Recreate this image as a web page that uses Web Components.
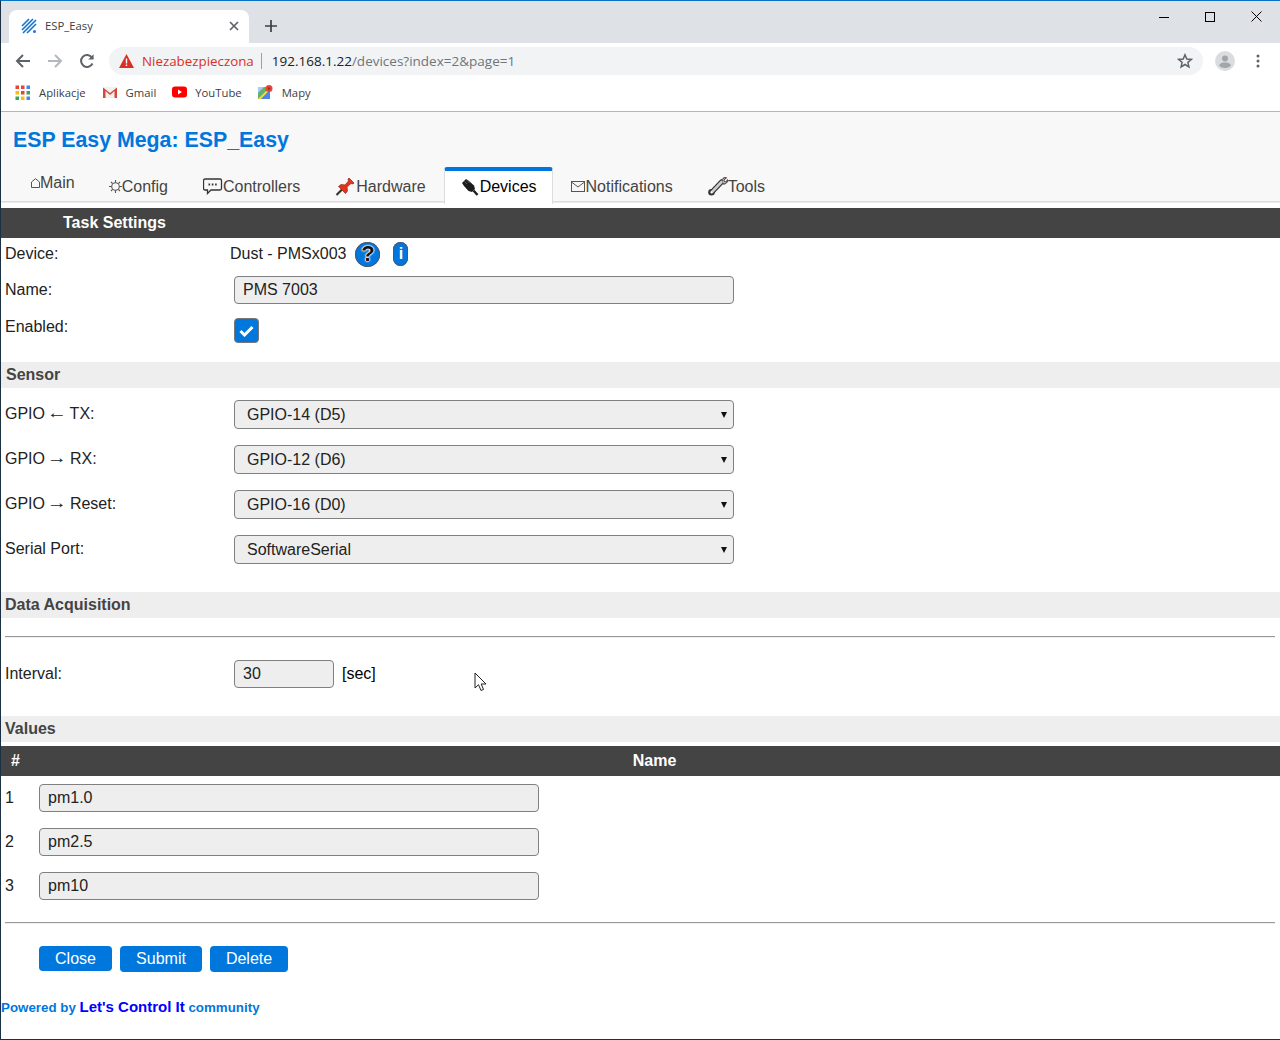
<!DOCTYPE html>
<html lang="pl">
<head>
<meta charset="utf-8">
<title>ESP_Easy</title>
<style>
  html, body { margin: 0; padding: 0; background: #fff; }
  body { font-family: "Liberation Sans", Arial, sans-serif; font-size: 16px; color: #000; }
  .arr { display: inline-block; transform: scaleX(1.25) translateY(-1.5px); }
</style>
</head>
<body>
<browser-window>
  <chrome-tabstrip title-text="ESP_Easy"></chrome-tabstrip>
  <chrome-toolbar></chrome-toolbar>
  <chrome-bookmarks></chrome-bookmarks>

  <esp-header heading="ESP Easy Mega: ESP_Easy">
    <esp-tab icon="home" lift>Main</esp-tab>
    <esp-tab icon="gear">Config</esp-tab>
    <esp-tab icon="chat">Controllers</esp-tab>
    <esp-tab icon="pin">Hardware</esp-tab>
    <esp-tab icon="plug" active>Devices</esp-tab>
    <esp-tab icon="mail">Notifications</esp-tab>
    <esp-tab icon="wrench">Tools</esp-tab>
  </esp-header>

  <dark-bar style="padding-left:62px">Task Settings</dark-bar>

  <form-row style="--h:38px;--label-top:7px;--field-top:6px;--field-left:-4px">
    <span slot="label">Device:</span>
    <device-info>Dust - PMSx003</device-info>
  </form-row>
  <form-row style="--h:38px;--label-top:5px">
    <span slot="label">Name:</span>
    <text-field style="width:500px">PMS 7003</text-field>
  </form-row>
  <form-row style="--h:48px;--label-top:4px;--field-top:4px">
    <span slot="label">Enabled:</span>
    <check-box></check-box>
  </form-row>

  <section-bar style="padding-left:5px">Sensor</section-bar>

  <div style="height:8px"></div>
  <form-row style="--h:45px;--label-top:9px;--field-top:4px">
    <span slot="label">GPIO <span class="arr">←</span> TX:</span>
    <select-field>GPIO-14 (D5)</select-field>
  </form-row>
  <form-row style="--h:45px;--label-top:9px;--field-top:4px">
    <span slot="label">GPIO <span class="arr">→</span> RX:</span>
    <select-field>GPIO-12 (D6)</select-field>
  </form-row>
  <form-row style="--h:45px;--label-top:9px;--field-top:4px">
    <span slot="label">GPIO <span class="arr">→</span> Reset:</span>
    <select-field>GPIO-16 (D0)</select-field>
  </form-row>
  <form-row style="--h:45px;--label-top:9px;--field-top:4px">
    <span slot="label">Serial Port:</span>
    <select-field>SoftwareSerial</select-field>
  </form-row>

  <section-bar style="margin-top:16px">Data Acquisition</section-bar>
  <rule-line style="margin-top:18px"></rule-line>

  <form-row style="--h:56px;--label-top:5px;margin-top:22px">
    <span slot="label">Interval:</span>
    <text-field style="width:100px">30</text-field>
    <span style="margin-left:8px;line-height:28px;align-self:flex-start">[sec]</span>
  </form-row>

  <section-bar>Values</section-bar>
  <values-head style="margin-top:4px"></values-head>

  <value-row index="1">pm1.0</value-row>
  <value-row index="2">pm2.5</value-row>
  <value-row index="3">pm10</value-row>

  <rule-line style="margin-top:14px"></rule-line>

  <button-row>
    <esp-button style="height:25px;width:73px">Close</esp-button>
    <esp-button style="width:82px">Submit</esp-button>
    <esp-button style="width:78px">Delete</esp-button>
  </button-row>

  <esp-footer></esp-footer>

  <mouse-cursor></mouse-cursor>
</browser-window>

<script>
/* tiny helper: every element below just stamps its markup into an open shadow root */
class ShadowBase extends HTMLElement {
  constructor() {
    super();
    this.attachShadow({ mode: 'open' });
  }
  connectedCallback() {
    this.shadowRoot.innerHTML = `<style>${this.css()}</style>${this.html()}`;
  }
  css() { return ':host{display:block}'; }
  html() { return '<slot></slot>'; }
}

const UI_FONT = '"Open Sans", "Noto Sans", sans-serif';

class BrowserWindow extends ShadowBase {
  css() {
    return `:host{display:block;position:relative;width:1280px;height:1040px;box-sizing:border-box;
      overflow:hidden;background:#fff;border-top:1px solid #0a74c4;border-left:1px solid #1c3044;
      border-bottom:1px solid #1c3044}`;
  }
}

class ChromeTabstrip extends ShadowBase {
  css() {
    return `:host{display:flex;align-items:flex-end;height:42px;background:#dee1e6;padding-left:8px;font-family:${UI_FONT}}
      .tab{position:relative;display:flex;align-items:center;box-sizing:border-box;width:240px;height:33px;
        background:#fff;border-radius:8px 8px 0 0;padding:0 10px 2px 12px;font-size:11.3px;color:#3c4043}
      .tab svg.fav{margin-right:8px}
      .title{flex:1}
      .plus{margin:0 0 11px 16px}
      .win{position:absolute;top:1px;right:1px;display:flex}
      .win div{width:46px;height:29px;display:flex;align-items:center;justify-content:center}`;
  }
  html() {
    return `<div class="tab">
        <svg class="fav" width="16" height="16" viewBox="0 0 16 16" fill="none" stroke="#1a73c8" stroke-width="1.6">
          <path d="M1 8 8 1M1 12 12 1M2 15 15 2M6 15 15 6"/><circle cx="13.5" cy="13.5" r="1.5" fill="#1a73e8" stroke="none"/>
        </svg>
        <span class="title">${this.getAttribute('title-text')}</span>
        <svg width="10" height="10" viewBox="0 0 10 10" stroke="#5f6368" stroke-width="1.7"><path d="M1 1 9 9M9 1 1 9"/></svg>
      </div>
      <svg class="plus" width="12" height="12" viewBox="0 0 12 12" stroke="#3c4043" stroke-width="1.7"><path d="M6 0V12M0 6H12"/></svg>
      <div class="win">
        <div><svg width="10" height="10" stroke="#000"><path d="M0 5.5H10"/></svg></div>
        <div><svg width="10" height="10" fill="none" stroke="#000"><rect x=".5" y=".5" width="9" height="9"/></svg></div>
        <div><svg width="11" height="11" stroke="#000"><path d="M.5.5 10.5 10.5M10.5.5 .5 10.5"/></svg></div>
      </div>`;
  }
}

class ChromeToolbar extends ShadowBase {
  css() {
    return `:host{display:flex;align-items:center;height:36px;background:#fff;font-family:${UI_FONT};padding-left:14px}
      .nav{display:flex;width:94px;gap:16px;align-items:center}
      .omni{display:flex;align-items:center;width:1094px;height:28px;background:#f1f3f4;border-radius:14px;
        box-sizing:border-box;padding:0 0 0 10px;font-size:13.35px;position:relative}
      .warn{color:#d93025;margin-left:8px}
      .sep{width:1px;height:16px;background:#9aa0a6;margin:0 10px 0 7px}
      .host{color:#202124;font-size:13.5px}
      .rest{color:#70757a;font-size:13.5px}
      .star{position:absolute;right:10px;top:6px}
      .avatar{margin-left:12px}
      .dots{margin-left:21px}`;
  }
  html() {
    return `<div class="nav">
        <svg width="16" height="16" viewBox="0 0 16 16" fill="none" stroke="#5f6368" stroke-width="2"><path d="M15 8H2M8 2 2 8l6 6"/></svg>
        <svg width="16" height="16" viewBox="0 0 16 16" fill="none" stroke="#b4b7bb" stroke-width="2"><path d="M1 8H14M8 2l6 6-6 6"/></svg>
        <svg width="16" height="16" viewBox="0 0 16 16" fill="none" stroke="#5f6368" stroke-width="2"><path d="M13.5 10.5A6 6 0 1 1 13 4.5"/><path d="M14.6 1.2V6.6H9.2Z" fill="#5f6368" stroke="none"/></svg>
      </div>
      <div class="omni">
        <svg width="15" height="14" viewBox="0 0 15 14"><path d="M7.5 0 15 14H0Z" fill="#d93025"/><path d="M6.8 4.5h1.4v5H6.8zM6.8 10.5h1.4V12H6.8z" fill="#fff"/></svg>
        <span class="warn">Niezabezpieczona</span><span class="sep"></span>
        <span class="host">192.168.1.22</span><span class="rest">/devices?index=2&amp;page=1</span>
        <svg class="star" width="16" height="16" viewBox="0 0 16 16" fill="none" stroke="#5f6368" stroke-width="1.5"><path d="M8 1.8 9.8 6l4.6.4-3.5 3 1 4.5L8 11.5l-3.9 2.4 1-4.5-3.5-3L6.200 6Z"/></svg>
      </div>
      <svg class="avatar" width="20" height="20" viewBox="0 0 20 20"><circle cx="10" cy="10" r="10" fill="#dadce0"/><circle cx="10" cy="7.500" r="3" fill="#a2a5a9"/><path d="M4 14.500c1-2.500 3.500-3 6-3s5 .5 6 3c-1.500 1.700-3.500 2.500-6 2.500s-4.500-.8-6-2.500Z" fill="#a2a5a9"/></svg>
      <svg class="dots" width="4" height="14" viewBox="0 0 4 14" fill="#5f6368"><circle cx="2" cy="2" r="1.500"/><circle cx="2" cy="7" r="1.500"/><circle cx="2" cy="12" r="1.500"/></svg>`;
  }
}

class ChromeBookmarks extends ShadowBase {
  css() {
    return `:host{display:flex;align-items:center;height:26px;padding:0 0 6px 14px;background:#fff;border-bottom:1px solid #b5b5b5;
        font-family:${UI_FONT};font-size:11.3px;color:#3c4043;box-sizing:content-box}
      .b{display:flex;align-items:center;gap:9px;margin-right:16px}`;
  }
  html() {
    const cols = ['#ea4335','#ea4335','#4285f4','#fbbc05','#ea4335','#34a853','#34a853','#fbbc05','#4285f4'];
    const dots = cols.map((c, i) => `<rect x="${(i % 3) * 5.5 + .5}" y="${Math.floor(i / 3) * 5.5 + .5}" width="3.500" height="3.500" fill="${c}"/>`).join('');
    return `<div class="b"><svg width="15" height="15">${dots}</svg>Aplikacje</div>
      <div class="b" style="gap:8px"><svg width="16" height="13" viewBox="0 0 16 13"><path d="M1 1h14v11H1Z" fill="#f1f1f1"/><path d="M1 12V1.500L8 7l7-5.500V12h-2.500V5L8 9 3.500 5V12Z" fill="#d8453a"/></svg>Gmail</div>
      <div class="b" style="gap:8px;margin-right:16px"><svg width="15" height="12" viewBox="0 0 15 12"><rect width="15" height="11" y=".5" rx="3" fill="#f00"/><path d="M6 3.500 10 6 6 8.500Z" fill="#fff"/></svg>YouTube</div>
      <div class="b"><svg width="15" height="15" viewBox="0 0 15 15"><path d="M0 2h12v12H0Z" fill="#5fb46b"/><path d="M0 14 12 2v3L3 14Z" fill="#f7d64a"/><path d="M3 14 12 5v9Z" fill="#4a86e8"/><path d="M0 2h6L0 8Z" fill="#a8c7fa"/><circle cx="11" cy="3.500" r="3.500" fill="#e2493b"/><circle cx="11" cy="3.500" r="1.200" fill="#a52a20"/></svg>Mapy</div>`;
  }
}

class EspHeader extends ShadowBase {
  css() {
    return `:host{display:block;height:96px;box-sizing:border-box;background:linear-gradient(#f8f8f8 0 89px,#dcdcdc 89px 90px,#ececec 90px 91px,#fff 91px)}
      h1{margin:0;height:55px;padding:15px 0 0 12px;box-sizing:border-box;font-size:21.330px;line-height:26px;color:#0077dd;font-weight:bold}
      nav{display:flex;padding-left:13px;height:37px}`;
  }
  html() {
    return `<h1>${this.getAttribute('heading')}</h1><nav><slot></slot></nav>`;
  }
}

const TAB_ICONS = {
  home: `<svg width="9" height="10" viewBox="0 0 9 10" fill="none" stroke="#555" stroke-width="1"><path d="M.5 9.500V4L4.500.7 8.500 4v5.500Z"/></svg>`,
  gear: `<svg width="13" height="13" viewBox="0 0 13 13" fill="none" stroke="#555" stroke-width="1.100"><circle cx="6.500" cy="6.500" r="3.800"/><path d="M6.500 0v2.500M6.500 10.500V13M0 6.500h2.500M10.500 6.500H13M2 2l1.600 1.600M9.400 9.400 11 11M2 11l1.600-1.600M9.400 3.600 11 2"/></svg>`,
  chat: `<svg width="20" height="17" viewBox="0 0 20 17" fill="none" stroke="#333" stroke-width="1.300"><path d="M2 1h15a1.500 1.500 0 0 1 1.500 1.500v8A1.500 1.500 0 0 1 17 12H8l-3.500 3.500V12H2A1.500 1.500 0 0 1 .5 10.500v-8A1.500 1.500 0 0 1 2 1Z"/><path d="M5.500 6.500h1.600M8.800 6.500h1.600M12.100 6.500h1.600" stroke-width="1.800"/></svg>`,
  pin: `<svg width="21" height="18" viewBox="0 0 21 18"><path d="M1.500 17 7 11.500" stroke="#333" stroke-width="2.200"/><path d="M3.500 8.500 6 6.500l4 .5 3.500-4-.5-2L14 0l5 5-1 1-2-.5-4 3.500.5 4-2 2.500Z" fill="#e8321a" stroke="#8a2a16" stroke-width=".7"/></svg>`,
  plug: `<svg width="18" height="17" viewBox="0 0 18 17"><path d="M0 4 4 0l3 2 5 4.500 1 3.500-3 3-3.500-1L2 7Z" fill="#1d1d1d"/><path d="M2.500 2.500 5 5M5 1.500 7.500 4" stroke="#777" stroke-width=".7"/><path d="M11.500 11.500 15.500 16" stroke="#1d1d1d" stroke-width="2.400"/></svg>`,
  mail: `<svg width="15" height="11" viewBox="0 0 15 11" fill="none" stroke="#555" stroke-width="1"><rect x=".5" y=".5" width="13" height="10"/><path d="M.5 1 7 6l6.500-5"/></svg>`,
  wrench: `<svg width="20" height="19" viewBox="0 0 20 19" fill="none"><path d="M4 15 13.500 5" stroke="#333" stroke-width="5" stroke-linecap="round"/><circle cx="3.500" cy="15.300" r="3.300" fill="#333"/><path d="M14 2.500C15 .8 17 .2 18.500 .7L16 3.200 16.500 4.500 17.800 5 19.800 2.500C20 5 18 7.500 15 7Z" fill="#bbb" stroke="#333"/><path d="M4 15 13.500 5" stroke="#ccc" stroke-width="2.600" stroke-linecap="round"/><circle cx="3.500" cy="15.300" r="1.100" fill="#fff"/></svg>`
};

class EspTab extends ShadowBase {
  css() {
    return `:host{display:flex;align-items:center;box-sizing:border-box;height:37px;padding:${this.hasAttribute('lift') ? '0 16px 5px 17px' : '2px 17px 0'};
        margin-right:1px;color:#444}
      :host([active]){color:#000;background:#fff;border:solid #ddd;border-width:0 1px;border-top:4px solid #0077dd;border-radius:3px 3px 0 0;padding:0 15px 1px 17px}
      svg{flex:none}`;
  }
  html() {
    return `${TAB_ICONS[this.getAttribute('icon')]}<slot></slot>`;
  }
}

class DarkBar extends ShadowBase {
  css() { return `:host{display:block;height:30px;line-height:30px;background:#444;color:#fff;font-weight:bold}`; }
}

class SectionBar extends ShadowBase {
  css() { return `:host{display:block;height:26px;line-height:26px;background:#eee;color:#444;font-weight:bold;padding-left:4px}`; }
}

class FormRow extends ShadowBase {
  css() {
    return `:host{display:flex;height:var(--h,38px);box-sizing:border-box;padding-left:4px}
      .label{flex:0 0 229px;padding-top:var(--label-top,0);line-height:18px;color:#222}
      .field{display:flex;align-items:flex-start;padding-top:var(--field-top,0);margin-left:var(--field-left,0)}`;
  }
  html() {
    return `<div class="label"><slot name="label"></slot></div><div class="field"><slot></slot></div>`;
  }
}

class DeviceInfo extends ShadowBase {
  css() {
    return `:host{display:flex;align-items:center;height:22px;margin-top:-1px;color:#222;white-space:nowrap}
      .q,.i{display:flex;align-items:center;justify-content:center;background:#0077dd;font-weight:bold;box-shadow:0 0 0 1px #556 inset}
      .q{width:25px;height:25px;border-radius:50%;margin-left:9px;font-size:22px;color:#111;text-shadow:0 0 1px #fff,0 0 1px #fff,0 0 2px #fff,0 0 2px #fff,0 0 2px #fff}
      .i{width:15px;height:24px;border-radius:8px;margin-left:13px;font-size:16px;color:#fff}`;
  }
  html() {
    return `<slot></slot><span class="q">?</span><span class="i">i</span>`;
  }
}

class TextField extends ShadowBase {
  css() {
    return `:host{display:block;box-sizing:border-box;height:28px;line-height:26px;padding-left:8px;background:#eee;
      border:1px solid #808080;border-radius:4px;color:#222}`;
  }
}

class SelectField extends ShadowBase {
  css() {
    return `:host{display:block;position:relative;box-sizing:border-box;width:500px;height:29px;line-height:27px;padding-left:12px;background:#eee;
      border:1px solid #808080;border-radius:4px;color:#222}
      :host::after{content:"";position:absolute;right:6px;top:11px;border:solid transparent;border-width:6px 3px 0;border-top-color:#111}`;
  }
}

class CheckBox extends ShadowBase {
  css() {
    return `:host{display:flex;align-items:center;justify-content:center;box-sizing:border-box;width:25px;height:25px;background:#0077dd;
      border:1px solid #777;border-radius:4px}`;
  }
  html() {
    return `<svg width="15" height="12" viewBox="0 0 15 12" fill="none" stroke="#fff" stroke-width="3"><path d="M1.500 6 5.500 10 13.500 2"/></svg>`;
  }
}

class RuleLine extends ShadowBase {
  css() { return `:host{display:block;height:1px;margin:0 5px 0 4px;background:#999;border-bottom:1px solid #eee}`; }
}

class ValuesHead extends ShadowBase {
  css() {
    return `:host{display:flex;height:30px;line-height:30px;background:#444;color:#fff;font-weight:bold}
      .n{width:38px;padding-left:10px;box-sizing:border-box}
      .t{flex:1;text-align:center;padding-right:10px}`;
  }
  html() { return `<div class="n">#</div><div class="t">Name</div>`; }
}

class ValueRow extends ShadowBase {
  css() {
    return `:host{display:flex;height:44px;box-sizing:border-box;padding:8px 0 0 4px}
      .idx{width:34px;line-height:28px;color:#222}
      .f{box-sizing:border-box;width:500px;height:28px;line-height:26px;padding-left:8px;background:#eee;border:1px solid #808080;border-radius:4px;color:#222}`;
  }
  html() {
    return `<div class="idx">${this.getAttribute('index')}</div><div class="f"><slot></slot></div>`;
  }
}

class ButtonRow extends ShadowBase {
  css() { return `:host{display:flex;align-items:flex-start;gap:8px;padding:22px 0 0 38px;height:26px}`; }
}

class EspButton extends ShadowBase {
  css() {
    return `:host{display:flex;align-items:center;justify-content:center;box-sizing:border-box;height:26px;background:#0077dd;color:#fff;border-radius:4px}`;
  }
}

class EspFooter extends ShadowBase {
  css() {
    return `:host{display:block;margin-top:26px;font-size:13.330px;line-height:18px;font-weight:bold;color:#0077dd;white-space:nowrap}
      b{font-size:15px;color:#00f}`;
  }
  html() { return `Powered by <b>Let's Control It</b> community`; }
}

class MouseCursor extends ShadowBase {
  css() { return `:host{position:absolute;left:473px;top:671px;width:14px;height:21px}`; }
  html() {
    return `<svg width="14" height="21" viewBox="0 0 14 21"><path d="M1 1V16l3.500-3.300L7 18.500l2.500-1L7.200 12H12Z" fill="#fff" stroke="#222" stroke-width="1"/></svg>`;
  }
}

customElements.define('browser-window', BrowserWindow);
customElements.define('chrome-tabstrip', ChromeTabstrip);
customElements.define('chrome-toolbar', ChromeToolbar);
customElements.define('chrome-bookmarks', ChromeBookmarks);
customElements.define('esp-header', EspHeader);
customElements.define('esp-tab', EspTab);
customElements.define('dark-bar', DarkBar);
customElements.define('section-bar', SectionBar);
customElements.define('form-row', FormRow);
customElements.define('device-info', DeviceInfo);
customElements.define('text-field', TextField);
customElements.define('select-field', SelectField);
customElements.define('check-box', CheckBox);
customElements.define('rule-line', RuleLine);
customElements.define('values-head', ValuesHead);
customElements.define('value-row', ValueRow);
customElements.define('button-row', ButtonRow);
customElements.define('esp-button', EspButton);
customElements.define('esp-footer', EspFooter);
customElements.define('mouse-cursor', MouseCursor);
</script>
</body>
</html>
